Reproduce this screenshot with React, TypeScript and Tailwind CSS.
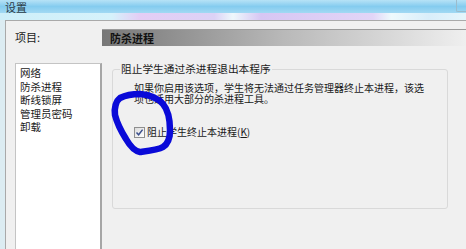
import React from "react";

const MENU = ["网络", "防杀进程", "断线锁屏", "管理员密码", "卸载"];

function CheckBox() {
  return (
    <div className="w-[11px] h-[11px] border border-[#8f8f8f] bg-gradient-to-br from-[#dcdcdc] to-[#ffffff] flex items-center justify-center">
      <svg width="9" height="9" viewBox="0 0 9 9">
        <path d="M1.5 4.5 L3.6 6.8 L7.6 1.6" fill="none" stroke="#3b4f8c" strokeWidth="1.5" />
      </svg>
    </div>
  );
}

export default function App() {
  return (
    <div
      className="relative w-[466px] h-[249px] overflow-hidden bg-[#f0f0f0] text-[#1a1a1a]"
      style={{ fontFamily: '"Noto Sans CJK SC", "Noto Sans", sans-serif' }}
    >
      {/* title bar */}
      <div className="h-[20px] flex flex-col">
        <div className="h-[13px] bg-gradient-to-b from-[#b6e2f6] via-[#84ccef] to-[#a2d9f3] flex items-start justify-between">
          <span className="ml-[5px] mt-[1px] text-[11px] leading-[13px] text-[#2b3a44]">设置</span>
          <div className="w-[10px] h-[12px] border-l border-b border-[#9bbccc] rounded-bl-[2px]" />
        </div>
        <div className="h-[7px] bg-[linear-gradient(to_right,#cdeff9_0%,#d6f2fb_24%,#e4cdf5_30%,#dcd2f6_46%,#eef8fc_50%,#d7c6f3_56%,#e2d5f7_80%,#eefafd_84%,#d9eefa_92%,#e6f6fc_100%)]" />
      </div>

      {/* body */}
      <div className="flex h-[229px]">
        <div className="w-[5px] bg-[#dcecf2]" />
        <div className="flex-1 flex border-l border-t border-[#a9a9a9] bg-[#f0f0f0]">
          {/* left column */}
          <div className="w-[96px] pl-[9px] flex flex-col">
            <div className="mt-[10px] text-[11px] leading-[12px]">项目:</div>
            <div className="mt-[20px] flex-1 w-[87px] bg-white border-l border-t border-[#c4c4c4] border-r-2 border-r-[#a6a6a6] pt-[2px] pl-[4px]">
              {MENU.map((m) => (
                <div key={m} className="text-[10.5px] leading-[13.5px]">
                  {m}
                </div>
              ))}
            </div>
          </div>

          {/* right column */}
          <div className="flex-1 flex flex-col">
            <div className="mt-[8px] h-[17px] border-t border-[#9a9a9a] bg-gradient-to-r from-[#777777] via-[#b9b9b9] to-[#efefef] flex items-center pl-[8px]">
              <span className="text-[11px] leading-[12px] font-bold text-[#111]">防杀进程</span>
            </div>
            <fieldset className="mt-[17px] ml-[10px] w-[336px] h-[146px] border border-[#d9d9d9] rounded-[3px] px-[21px] m-0 p-0">
              <legend className="ml-[-14px] px-[1px] text-[10.7px] leading-[12px]">阻止学生通过杀进程退出本程序</legend>
              <p className="mt-[8px] text-[10px] leading-[10.5px] whitespace-nowrap">
                如果你启用该选项，学生将无法通过任务管理器终止本进程，该选
                <br />
                项也适用大部分的杀进程工具。
              </p>
              <label className="mt-[22px] flex items-center gap-[2px] text-[10px] leading-[12px]">
                <CheckBox />
                <span>
                  阻止学生终止本进程(<span className="underline">K</span>)
                </span>
              </label>
            </fieldset>
          </div>
        </div>
      </div>

      {/* hand-drawn annotation */}
      <svg className="absolute left-0 top-0 pointer-events-none" width="466" height="249">
        <path
          d="M120 98 C126 95 132 94 140 94 C150 95 158 98 163 104 C168 110 170 120 170 130 C170 138 168 144 163 147 C158 150 148 151 140 152 C134 151 130 146 126 139 C121 131 117 123 115 115 C114 108 116 101 120 98 Z"
          fill="none"
          stroke="#0a0ad8"
          strokeWidth="6.5"
          strokeLinejoin="round"
        />
      </svg>
    </div>
  );
}
